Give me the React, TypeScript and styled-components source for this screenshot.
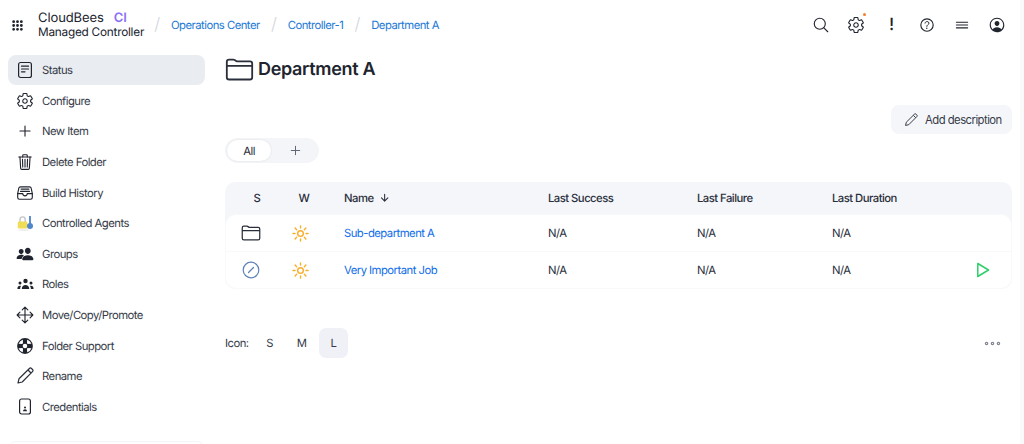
import React from 'react';
import styled, {createGlobalStyle} from 'styled-components';
import {
  IoApps,
  IoSettingsOutline,
  IoAddOutline,
  IoTrashOutline,
  IoFileTrayFullOutline,
  IoPeople,
  IoMoveOutline,
  IoHelpBuoy,
  IoFolderOutline,
  IoSearchOutline,
  IoPersonCircleOutline,
  IoHelpCircleOutline,
  IoReorderThreeOutline,
  IoArrowDownOutline,
  IoEllipsisHorizontalOutline,
} from 'react-icons/io5';

const GlobalStyle = createGlobalStyle`
  html, body {
    margin: 0;
    padding: 0;
    background: #fff;
    overflow: hidden;
  }
  body {
    font-family: Inter, "Liberation Sans", sans-serif;
    color: #2a2f3c;
    font-size: 11.3px;
    letter-spacing: -0.53px;
    text-rendering: geometricPrecision;
  }
  * { box-sizing: border-box; }
`;

const Page = styled.div`
  position: relative;
  width: 1024px;
  height: 444px;
  overflow: hidden;
`;

const Scrollbar = styled.div`
  position: absolute;
  top: 0;
  right: 0;
  width: 4px;
  height: 444px;
  background: #fafafb;
`;

const TopBar = styled.header`
  display: flex;
  align-items: center;
  height: 50px;
  padding: 0 18px 0 11px;
`;

const Apps = styled.span`
  display: flex;
  width: 13px;
  font-size: 13px;
  color: #20242e;
  margin-right: 14px;
`;

const Logo = styled.div`
  display: flex;
  flex-direction: column;
  width: 105px;
  font-size: 11.8px;
  letter-spacing: -0.24px;
  line-height: 14.5px;
  white-space: nowrap;
  color: #20242e;
`;

const LogoBrand = styled.span`
  font-size: 13px;
  letter-spacing: -0.1px;
`;

const LogoCi = styled.span`
  color: #8b6ff5;
  font-weight: 600;
  margin-left: 10px;
`;

const Crumbs = styled.nav`
  display: flex;
  align-items: center;
  flex: 1;
`;

const Slash = styled.span`
  color: #d2d6dc;
  font-size: 17px;
  font-weight: 300;
  width: 28px;
  text-align: center;
`;

const CrumbLink = styled.a`
  color: #1b78d6;
`;

const TopIcons = styled.div`
  display: flex;
  align-items: center;
  gap: 17.2px;
`;

const TopIcon = styled.span`
  position: relative;
  display: flex;
  align-items: center;
  justify-content: center;
  width: 18px;
  height: 18px;
  font-size: 18px;
  color: #20242e;
`;

const Bang = styled.span`
  font-size: 17px;
  font-weight: 500;
  line-height: 18px;
`;

const Dot = styled.span`
  position: absolute;
  top: -3px;
  right: -1px;
  width: 3px;
  height: 3px;
  border-radius: 50%;
  background: #f5812a;
`;

const Body = styled.div`
  display: flex;
  height: 394px;
`;

const Sidebar = styled.aside`
  position: relative;
  width: 225px;
  flex: none;
  padding: 5px 20px 0 8px;
`;

const SideFoot = styled.div`
  position: absolute;
  left: 8px;
  top: 391px;
  width: 197px;
  height: 20px;
  border: 1px solid #f3f4f6;
  border-radius: 8px;
`;

const SideItem = styled.a<{$active?: boolean}>`
  display: flex;
  align-items: center;
  height: 30px;
  margin-bottom: 0.64px;
  padding-left: 8px;
  gap: 8px;
  border-radius: 8px;
  color: #363b48;
  background: ${p => (p.$active ? '#e9edf1' : 'transparent')};
`;

const SideIcon = styled.span`
  display: flex;
  align-items: center;
  justify-content: center;
  width: 18px;
  height: 18px;
  font-size: 18px;
  color: #20242e;
  flex: none;
`;

const Main = styled.main`
  flex: 1;
  padding-right: 12px;
  min-width: 0;
`;

const Title = styled.h1`
  display: flex;
  align-items: center;
  gap: 4px;
  margin: 0;
  height: 38px;
  font-size: 18px;
  letter-spacing: -0.32px;
  font-weight: 600;
  color: #20242e;
`;

const TitleIcon = styled.span`
  display: flex;
  font-size: 29px;
  color: #2a2f3c;
`;

const ActionRow = styled.div`
  display: flex;
  justify-content: flex-end;
  margin-top: 17px;
  height: 28px;
`;

const AddButton = styled.button`
  display: flex;
  align-items: center;
  gap: 7px;
  height: 29px;
  width: 121px;
  padding: 0 0 0 13px;
  border: none;
  border-radius: 8px;
  background: #f5f6f9;
  font: inherit;
  letter-spacing: inherit;
  color: #363b48;
`;

const Tabs = styled.div`
  display: flex;
  align-items: center;
  width: 94px;
  height: 25px;
  margin-top: 5px;
  padding: 2px;
  border-radius: 12.5px;
  background: #f3f5f8;
`;

const Tab = styled.span<{$active?: boolean}>`
  display: flex;
  align-items: center;
  justify-content: center;
  width: 45px;
  height: 21px;
  border-radius: 10.5px;
  color: #2a2f3c;
  background: ${p => (p.$active ? '#fff' : 'transparent')};
  box-shadow: ${p => (p.$active ? '0 0 2px rgba(30,40,60,0.12)' : 'none')};
`;

const TabAdd = styled(Tab)`
  font-size: 15px;
  color: #5a606c;
  margin-left: 2px;
`;

const Table = styled.div`
  margin-top: 19px;
  padding: 0 1px 1px;
  border-radius: 10px;
  background: #f5f6f9;
`;

const columns = '52px 66px 204px 149px 135px 1fr 58px';

const HeadRow = styled.div`
  display: grid;
  grid-template-columns: ${columns};
  align-items: center;
  height: 32px;
  padding-bottom: 1px;
  font-weight: 500;
  color: #2a2f3c;
`;

const HeadCell = styled.span<{$pad?: string}>`
  display: flex;
  align-items: center;
  gap: 5px;
  ${p => (p.$pad ? `justify-content: center; padding: ${p.$pad};` : '')}
`;

const Rows = styled.div`
  margin-top: 1px;
  background: #fff;
  border-radius: 10px;
  box-shadow: 0 0 0 1px #f8f9fb;
  overflow: hidden;
`;

const Row = styled.div<{$height: number}>`
  display: grid;
  grid-template-columns: ${columns};
  align-items: center;
  height: ${p => p.$height}px;
  color: #2a2f3c;
  & + & { border-top: 1px solid #f8f9fb; }
`;

const IconCell = styled.span`
  display: flex;
  justify-content: center;
  padding-right: 2px;
  font-size: 20px;
  color: #2a2f3c;
`;

const WeatherCell = styled(IconCell)`
  padding-right: 22px;
`;

const JobLink = styled.a`
  color: #0f6de8;
`;

const RunCell = styled.span`
  display: flex;
  justify-content: flex-end;
  padding-right: 21px;
`;

const IconSizes = styled.div`
  display: flex;
  align-items: center;
  margin-top: 39px;
  height: 30px;
  color: #363b48;
`;

const IconLabel = styled.span`
  width: 27px;
`;

const SizeBtn = styled.span<{$active?: boolean}>`
  display: flex;
  align-items: center;
  justify-content: center;
  width: 29px;
  height: 30px;
  margin-left: 3px;
  border-radius: 7px;
  background: ${p => (p.$active ? '#eff1f6' : 'transparent')};
`;

const More = styled.span`
  display: flex;
  margin-left: auto;
  margin-right: 10px;
  font-size: 19px;
  color: #80858f;
`;

function StatusIcon() {
  return (
    <svg width="18" height="18" viewBox="0 0 18 18" fill="none" stroke="#20242e" strokeWidth="1.2" strokeLinecap="round">
      <rect x="2.600" y="1.500" width="12.800" height="15" rx="2" />
      <path d="M5.500 5.200h7M5.500 8h7M5.500 10.800h3.500" />
    </svg>
  );
}

function PencilIcon({size}: {size: number}) {
  return (
    <svg width={size} height={size} viewBox="0 0 18 18" fill="none" stroke="#2a2f3c" strokeWidth="1.200" strokeLinejoin="round">
      <path d="M2 16l1-4.200L13.400 1.500a1.500 1.500 0 0 1 2.100 0l1 1a1.500 1.500 0 0 1 0 2.100L6.200 15z" />
      <path d="M12 3l3 3" />
    </svg>
  );
}

function PlayIcon() {
  return (
    <svg width="14" height="16" viewBox="0 0 14 16" fill="none" stroke="#2fce6a" strokeWidth="1.500" strokeLinejoin="round">
      <path d="M1.800 1.500L12.500 8 1.800 14.500z" />
    </svg>
  );
}

function SunIcon() {
  return (
    <svg width="17" height="17" viewBox="0 0 18 18" fill="none" stroke="#f9ae2b" strokeWidth="1.500" strokeLinecap="round">
      <circle cx="9" cy="9" r="3" />
      <path d="M9 1v2.200M9 14.800V17M1 9h2.200M14.800 9H17M3.300 3.300l1.600 1.600M13.100 13.100l1.600 1.600M3.300 14.700l1.600-1.600M13.100 4.900l1.600-1.600" />
    </svg>
  );
}

function RolesIcon() {
  return (
    <svg width="17" height="14" viewBox="0 0 17 14" fill="#20242e">
      <circle cx="8.500" cy="4" r="2.200" />
      <path d="M4.800 12c0-2.600 1.600-4 3.700-4s3.700 1.400 3.700 4z" />
      <circle cx="3" cy="6" r="1.500" />
      <path d="M.4 12c0-2 1-3.200 2.600-3.200.5 0 .8.1 1 .2-.6.8-.9 1.800-.9 3z" />
      <circle cx="14" cy="6" r="1.500" />
      <path d="M16.600 12c0-2-1-3.200-2.600-3.200-.5 0-.8.1-1 .2.6.8.9 1.800.9 3z" />
    </svg>
  );
}

function CredentialsIcon() {
  return (
    <svg width="16" height="17" viewBox="0 0 16 17" fill="none" stroke="#20242e">
      <rect x="2.600" y="1" width="10.800" height="15" rx="2" strokeWidth="1.200" />
      <circle cx="8" cy="9.500" r="1" fill="#20242e" stroke="none" />
      <path d="M6 13.300c0-1.200.9-2 2-2s2 .8 2 2z" fill="#20242e" stroke="none" />
    </svg>
  );
}

function AgentsIcon() {
  return (
    <svg width="17" height="16" viewBox="0 0 17 16">
      <path d="M3 7V4.500a2.600 2.600 0 0 1 5.200 0V7" fill="none" stroke="#c4c6cb" strokeWidth="1.400" />
      <rect x=".8" y="6.500" width="9.500" height="7" rx="1.200" fill="#f1dc55" />
      <rect x="12" y="1" width="2" height="8" fill="#5b8fd0" />
      <circle cx="13" cy="11" r="3" fill="#4f86cc" />
      <ellipse cx="7" cy="15" rx="6" ry=".8" fill="#e9e9ec" />
    </svg>
  );
}

function DisabledIcon() {
  return (
    <svg width="18" height="18" viewBox="0 0 18 18" fill="none" stroke="#5f83b8">
      <circle cx="9" cy="9" r="7.800" strokeWidth="1.200" />
      <path d="M6.500 11.500l5-5" strokeWidth="1.200" strokeLinecap="round" />
    </svg>
  );
}

const sideItems: {label: string; icon: React.ReactNode}[] = [
  {label: 'Status', icon: <StatusIcon />},
  {label: 'Configure', icon: <IoSettingsOutline />},
  {label: 'New Item', icon: <IoAddOutline />},
  {label: 'Delete Folder', icon: <IoTrashOutline />},
  {label: 'Build History', icon: <IoFileTrayFullOutline />},
  {label: 'Controlled Agents', icon: <AgentsIcon />},
  {label: 'Groups', icon: <IoPeople />},
  {label: 'Roles', icon: <RolesIcon />},
  {label: 'Move/Copy/Promote', icon: <IoMoveOutline />},
  {label: 'Folder Support', icon: <IoHelpBuoy />},
  {label: 'Rename', icon: <PencilIcon size={18} />},
  {label: 'Credentials', icon: <CredentialsIcon />},
];

export default function App() {
  return (
    <Page>
      <GlobalStyle />
      <TopBar>
        <Apps><IoApps /></Apps>
        <Logo>
          <LogoBrand>CloudBees<LogoCi>CI</LogoCi></LogoBrand>
          <span>Managed Controller</span>
        </Logo>
        <Crumbs>
          <Slash>/</Slash>
          <CrumbLink>Operations Center</CrumbLink>
          <Slash>/</Slash>
          <CrumbLink>Controller-1</CrumbLink>
          <Slash>/</Slash>
          <CrumbLink>Department A</CrumbLink>
        </Crumbs>
        <TopIcons>
          <TopIcon><IoSearchOutline /></TopIcon>
          <TopIcon><IoSettingsOutline /><Dot /></TopIcon>
          <TopIcon><Bang>!</Bang></TopIcon>
          <TopIcon><IoHelpCircleOutline /></TopIcon>
          <TopIcon><IoReorderThreeOutline /></TopIcon>
          <TopIcon><IoPersonCircleOutline /></TopIcon>
        </TopIcons>
      </TopBar>
      <Body>
        <Sidebar>
          {sideItems.map((item, index) => (
            <SideItem key={item.label} $active={index === 0}>
              <SideIcon>{item.icon}</SideIcon>
              {item.label}
            </SideItem>
          ))}
          <SideFoot />
        </Sidebar>
        <Main>
          <Title>
            <TitleIcon><IoFolderOutline /></TitleIcon>
            Department A
          </Title>
          <ActionRow>
            <AddButton><PencilIcon size={14} />Add description</AddButton>
          </ActionRow>
          <Tabs>
            <Tab $active>All</Tab>
            <TabAdd><IoAddOutline /></TabAdd>
          </Tabs>
          <Table>
            <HeadRow>
              <HeadCell $pad="0 0 0 10px">S</HeadCell>
              <HeadCell $pad="0 14px 0 0">W</HeadCell>
              <HeadCell>Name <IoArrowDownOutline /></HeadCell>
              <HeadCell>Last Success</HeadCell>
              <HeadCell>Last Failure</HeadCell>
              <HeadCell>Last Duration</HeadCell>
              <span />
            </HeadRow>
            <Rows>
              <Row $height={36}>
                <IconCell><IoFolderOutline /></IconCell>
                <WeatherCell><SunIcon /></WeatherCell>
                <JobLink>Sub-department A</JobLink>
                <span>N/A</span>
                <span>N/A</span>
                <span>N/A</span>
                <span />
              </Row>
              <Row $height={37}>
                <IconCell><DisabledIcon /></IconCell>
                <WeatherCell><SunIcon /></WeatherCell>
                <JobLink>Very Important Job</JobLink>
                <span>N/A</span>
                <span>N/A</span>
                <span>N/A</span>
                <RunCell><PlayIcon /></RunCell>
              </Row>
            </Rows>
          </Table>
          <IconSizes>
            <IconLabel>Icon:</IconLabel>
            <SizeBtn>S</SizeBtn>
            <SizeBtn>M</SizeBtn>
            <SizeBtn $active>L</SizeBtn>
            <More><IoEllipsisHorizontalOutline /></More>
          </IconSizes>
        </Main>
      </Body>
      <Scrollbar />
    </Page>
  );
}
